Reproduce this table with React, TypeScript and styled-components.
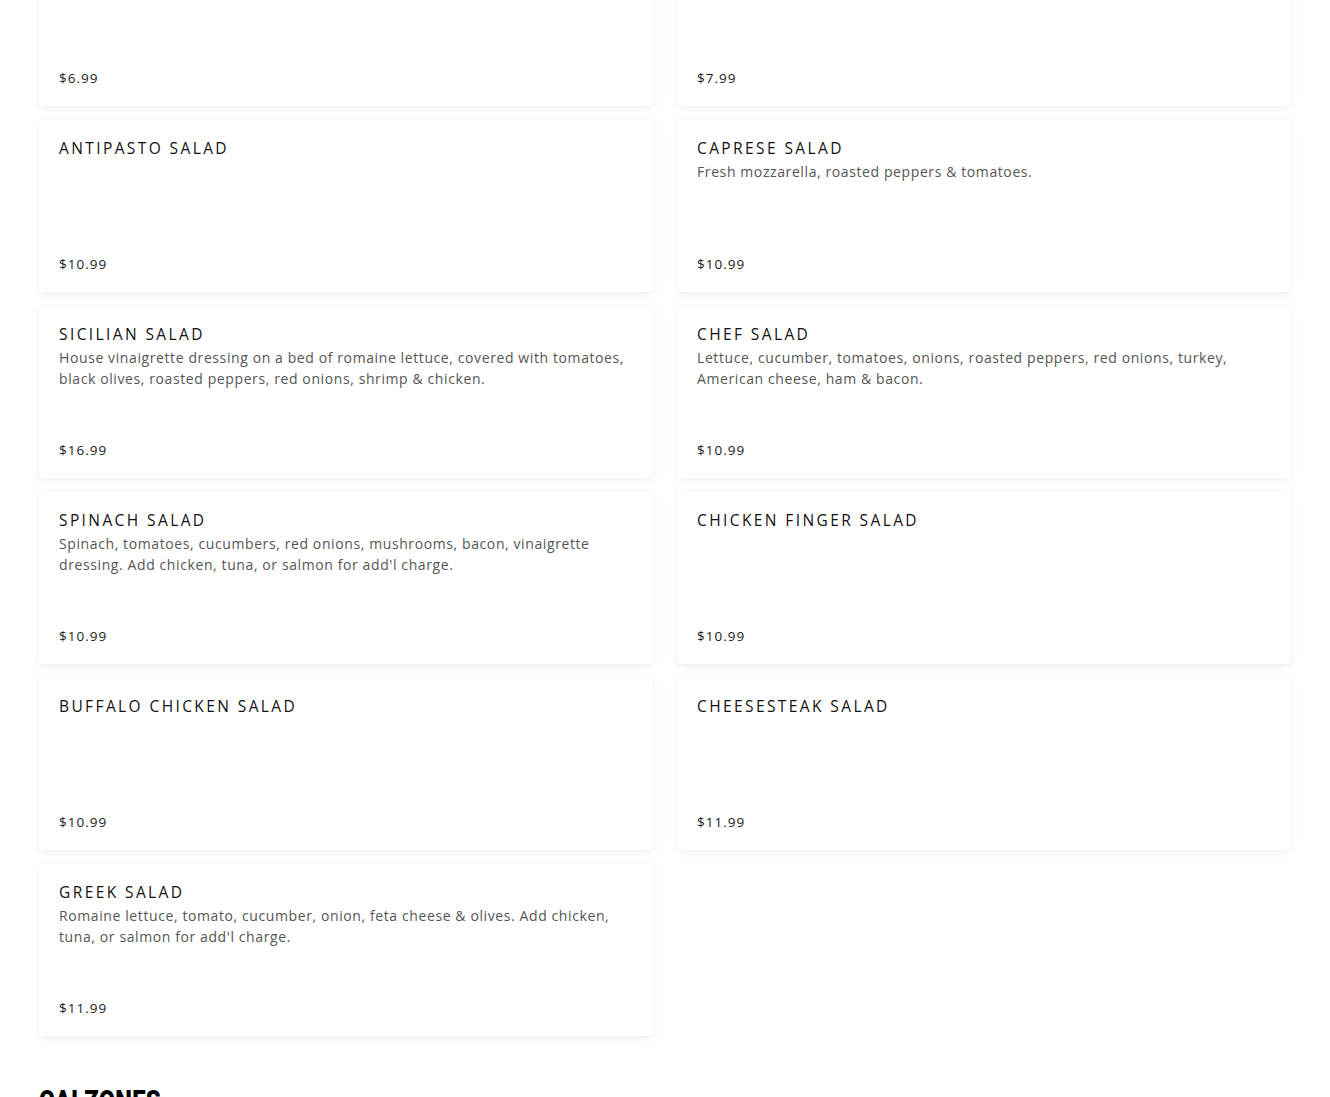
import React from "react";
import styled, { createGlobalStyle } from "styled-components";

const Global = createGlobalStyle`
  html, body { margin: 0; padding: 0; background: #ffffff; }
  body { font-family: "Open Sans", "DejaVu Sans", sans-serif; overflow: hidden; }
`;

const Page = styled.main`
  width: 1252px;
  margin: -66px auto 0;
`;

const Grid = styled.section`
  display: grid;
  grid-template-columns: 1fr 1fr;
  column-gap: 24px;
  row-gap: 14px;
`;

const Card = styled.article`
  height: 172px;
  box-sizing: border-box;
  padding: 18px 20px 20px 20px;
  background: #ffffff;
  border-radius: 4px;
  box-shadow: 0 2px 8px rgba(0, 0, 0, 0.07), 0 0 2px rgba(0, 0, 0, 0.03);
  display: flex;
  flex-direction: column;
`;

const Title = styled.h3`
  margin: 0;
  font-family: "Open Sans", sans-serif;
  font-weight: 400;
  font-size: 15.5px;
  line-height: 20px;
  letter-spacing: 2.4px;
  color: #111111;
  text-transform: uppercase;
`;

const Desc = styled.p`
  margin: 3px 0 0;
  font-family: "Open Sans", sans-serif;
  font-size: 14px;
  line-height: 21px;
  letter-spacing: 0.6px;
  color: #555555;
`;

const Price = styled.div`
  margin-top: auto;
  font-family: "Open Sans", sans-serif;
  font-size: 13.5px;
  line-height: 16px;
  letter-spacing: 1px;
  color: #1a1a1a;
`;

const Section = styled.h2`
  margin: 48px 0 0;
  font-family: "Roboto", "Liberation Sans", sans-serif;
  font-weight: 900;
  font-size: 30px;
  line-height: 34px;
  letter-spacing: 0.3px;
  color: #000;
  transform: scaleX(0.79);
  transform-origin: left;
`;

type Item = { name: string; desc?: string; price: string };

const items: Item[] = [
  { name: "", price: "$6.99" },
  { name: "", price: "$7.99" },
  { name: "Antipasto Salad", price: "$10.99" },
  { name: "Caprese Salad", desc: "Fresh mozzarella, roasted peppers & tomatoes.", price: "$10.99" },
  {
    name: "Sicilian Salad",
    desc: "House vinaigrette dressing on a bed of romaine lettuce, covered with tomatoes, black olives, roasted peppers, red onions, shrimp & chicken.",
    price: "$16.99",
  },
  {
    name: "Chef Salad",
    desc: "Lettuce, cucumber, tomatoes, onions, roasted peppers, red onions, turkey, American cheese, ham & bacon.",
    price: "$10.99",
  },
  {
    name: "Spinach Salad",
    desc: "Spinach, tomatoes, cucumbers, red onions, mushrooms, bacon, vinaigrette dressing. Add chicken, tuna, or salmon for add'l charge.",
    price: "$10.99",
  },
  { name: "Chicken Finger Salad", price: "$10.99" },
  { name: "Buffalo Chicken Salad", price: "$10.99" },
  { name: "Cheesesteak Salad", price: "$11.99" },
  {
    name: "Greek Salad",
    desc: "Romaine lettuce, tomato, cucumber, onion, feta cheese & olives. Add chicken, tuna, or salmon for add'l charge.",
    price: "$11.99",
  },
];

export default function App() {
  return (
    <>
      <Global />
      <Page>
        <Grid>
          {items.map((it, i) => (
            <Card key={i}>
              {it.name && <Title>{it.name}</Title>}
              {it.desc && <Desc>{it.desc}</Desc>}
              <Price>{it.price}</Price>
            </Card>
          ))}
        </Grid>
        <Section>CALZONES</Section>
      </Page>
    </>
  );
}
